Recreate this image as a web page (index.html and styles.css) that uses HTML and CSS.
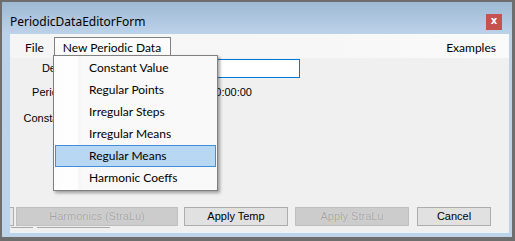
FILE: index.html
```
<!DOCTYPE html>
<html>
<head>
<meta http-equiv="Content-Type" content="text/html; charset=utf-8"/>
<title>PeriodicDataEditorForm</title>
<link rel="stylesheet" href="styles.css">
</head>
<body>
<div class="window">
  <div class="titlebar">
    <span class="title">PeriodicDataEditorForm</span>
    <span class="close">x</span>
  </div>
  <div class="client">
    <div class="menubar">
      <span class="menu-item">File</span>
      <span class="menu-item open">New Periodic Data</span>
      <span class="menu-item right">Examples</span>
    </div>

    <div class="form">
      <span class="label">Description:</span>
      <span class="textbox"></span>
      <span class="label">Period length:</span>
      <span class="value">1.00:00:00</span>
      <span class="label">Constant value:</span>
      <span class="value"></span>
    </div>

    <div class="buttons">
      <span class="btn stub"></span>
      <span class="btn disabled harmonics">Harmonics (StraLu)</span>
      <span class="btn temp">Apply Temp</span>
      <span class="btn disabled stralu">Apply StraLu</span>
      <span class="btn cancel">Cancel</span>
    </div>
    <div class="rules">
      <span class="rule short"></span>
      <span class="rule long"></span>
    </div>
  </div>

  <ul class="dropdown">
    <li>Constant Value</li>
    <li>Regular Points</li>
    <li>Irregular Steps</li>
    <li>Irregular Means</li>
    <li class="hover">Regular Means</li>
    <li>Harmonic Coeffs</li>
  </ul>
</div>
</body>
</html>
```
FILE: styles.css
```
body {
  margin: 0;
  width: 515px;
  height: 241px;
  background-color: #6e6e6e;
  overflow: hidden;
}

.window {
  position: relative;
  margin: 2px 0 0 2px;
  width: 510px;
  height: 235px;
  display: flex;
  flex-direction: column;
  background: linear-gradient(#9fb9d4 0, #bcd2e9 32px, #bdd3ea 100%);
}

.titlebar {
  height: 32px;
  display: flex;
  align-items: flex-start;
  justify-content: space-between;
}

.title {
  margin: 12px 0 0 8px;
  font-family: "Noto Sans", sans-serif;
  font-size: 12px;
  line-height: 16px;
  color: #000;
}

.close {
  margin: 12px 10px 0 0;
  width: 16px;
  height: 16px;
  background-color: #c75050;
  color: #fff;
  font-family: "DejaVu Sans", sans-serif;
  font-weight: bold;
  font-size: 10px;
  line-height: 14px;
  text-align: center;
}

.client {
  margin: 0 3px 0 8px;
  height: 198px;
  display: flex;
  flex-direction: column;
  background-color: #f0f0f0;
  border-bottom: 1px solid #e8f4fc;
}

.menubar {
  height: 24px;
  display: flex;
  align-items: flex-end;
  background: linear-gradient(90deg, #f5f5f5, #f7f7f7 60%, #fafafa);
  font-family: Lato, "Noto Sans", sans-serif;
  font-size: 12px;
}

.menu-item {
  height: 20px;
  line-height: 19px;
  padding: 0 8px;
  color: #000;
  white-space: nowrap;
  border: 1px solid transparent;
  border-bottom: none;
}

.menu-item:first-child {
  margin-left: 6px;
}

.menu-item.open {
  margin-left: 1px;
  width: 99px;
  background-color: #fcfcfc;
  border-color: #808080;
}

.menu-item.right {
  margin-left: auto;
  padding-right: 12px;
}

.form {
  display: grid;
  grid-template-columns: 90px 195px;
  grid-template-rows: 20px 28px 24px;
  column-gap: 5px;
  align-items: center;
  font-family: "Liberation Sans", sans-serif;
  font-size: 11px;
  color: #000;
}

.label {
  text-align: right;
}

.textbox {
  height: 17px;
  border: 1px solid #0078d7;
  background-color: #fff;
}

.value {
  padding-left: 95px;
}

.buttons {
  margin-top: auto;
  display: flex;
  gap: 6px;
  font-family: "Liberation Sans", sans-serif;
  font-size: 11px;
}

.btn {
  height: 17px;
  line-height: 17px;
  text-align: center;
  border: 1px solid #adadad;
  background-color: #e1e1e1;
  color: #000;
}

.btn.disabled {
  background-color: #cccccc;
  border-color: #bfbfbf;
  color: #a3a3a3;
  text-shadow: 0 0 1px #f4f4f4;
}

.stub {
  width: 3px;
  margin-right: -4px;
  border-left: none;
  background-color: #e6e6e6;
}

.harmonics { width: 160px; }
.temp { width: 102px; }
.stralu { width: 112px; margin-left: 1px; }
.cancel { width: 72px; margin-left: 2px; }

.rules {
  height: 5px;
  display: flex;
  gap: 4px;
  padding: 1px 0 0 1px;
}

.rule {
  height: 1px;
  background-color: #a8a8a8;
}

.rule.short { width: 22px; }
.rule.long { width: 73px; }

/* opened menu, lies over the form */
.dropdown {
  position: absolute;
  left: 51px;
  top: 53px;
  width: 163px;
  margin: 0;
  padding: 1px 0;
  list-style: none;
  border: 1px solid #808080;
  background: linear-gradient(90deg, #fdfdfd 0, #fefefe 23px, #f6f6f6 25px, #f9f9f9 30px);
  box-shadow: 2px 2px 3px rgba(0, 0, 0, 0.35);
  font-family: Lato, "Noto Sans", sans-serif;
  font-size: 12px;
  color: #000;
}

.dropdown li {
  height: 22px;
  line-height: 22px;
  margin: 0 1px;
  padding-left: 34px;
  box-sizing: border-box;
}

.dropdown li.hover {
  background-color: #b7d7f3;
  border: 1px solid #3d8fdb;
  line-height: 20px;
  padding-left: 33px;
}
```
